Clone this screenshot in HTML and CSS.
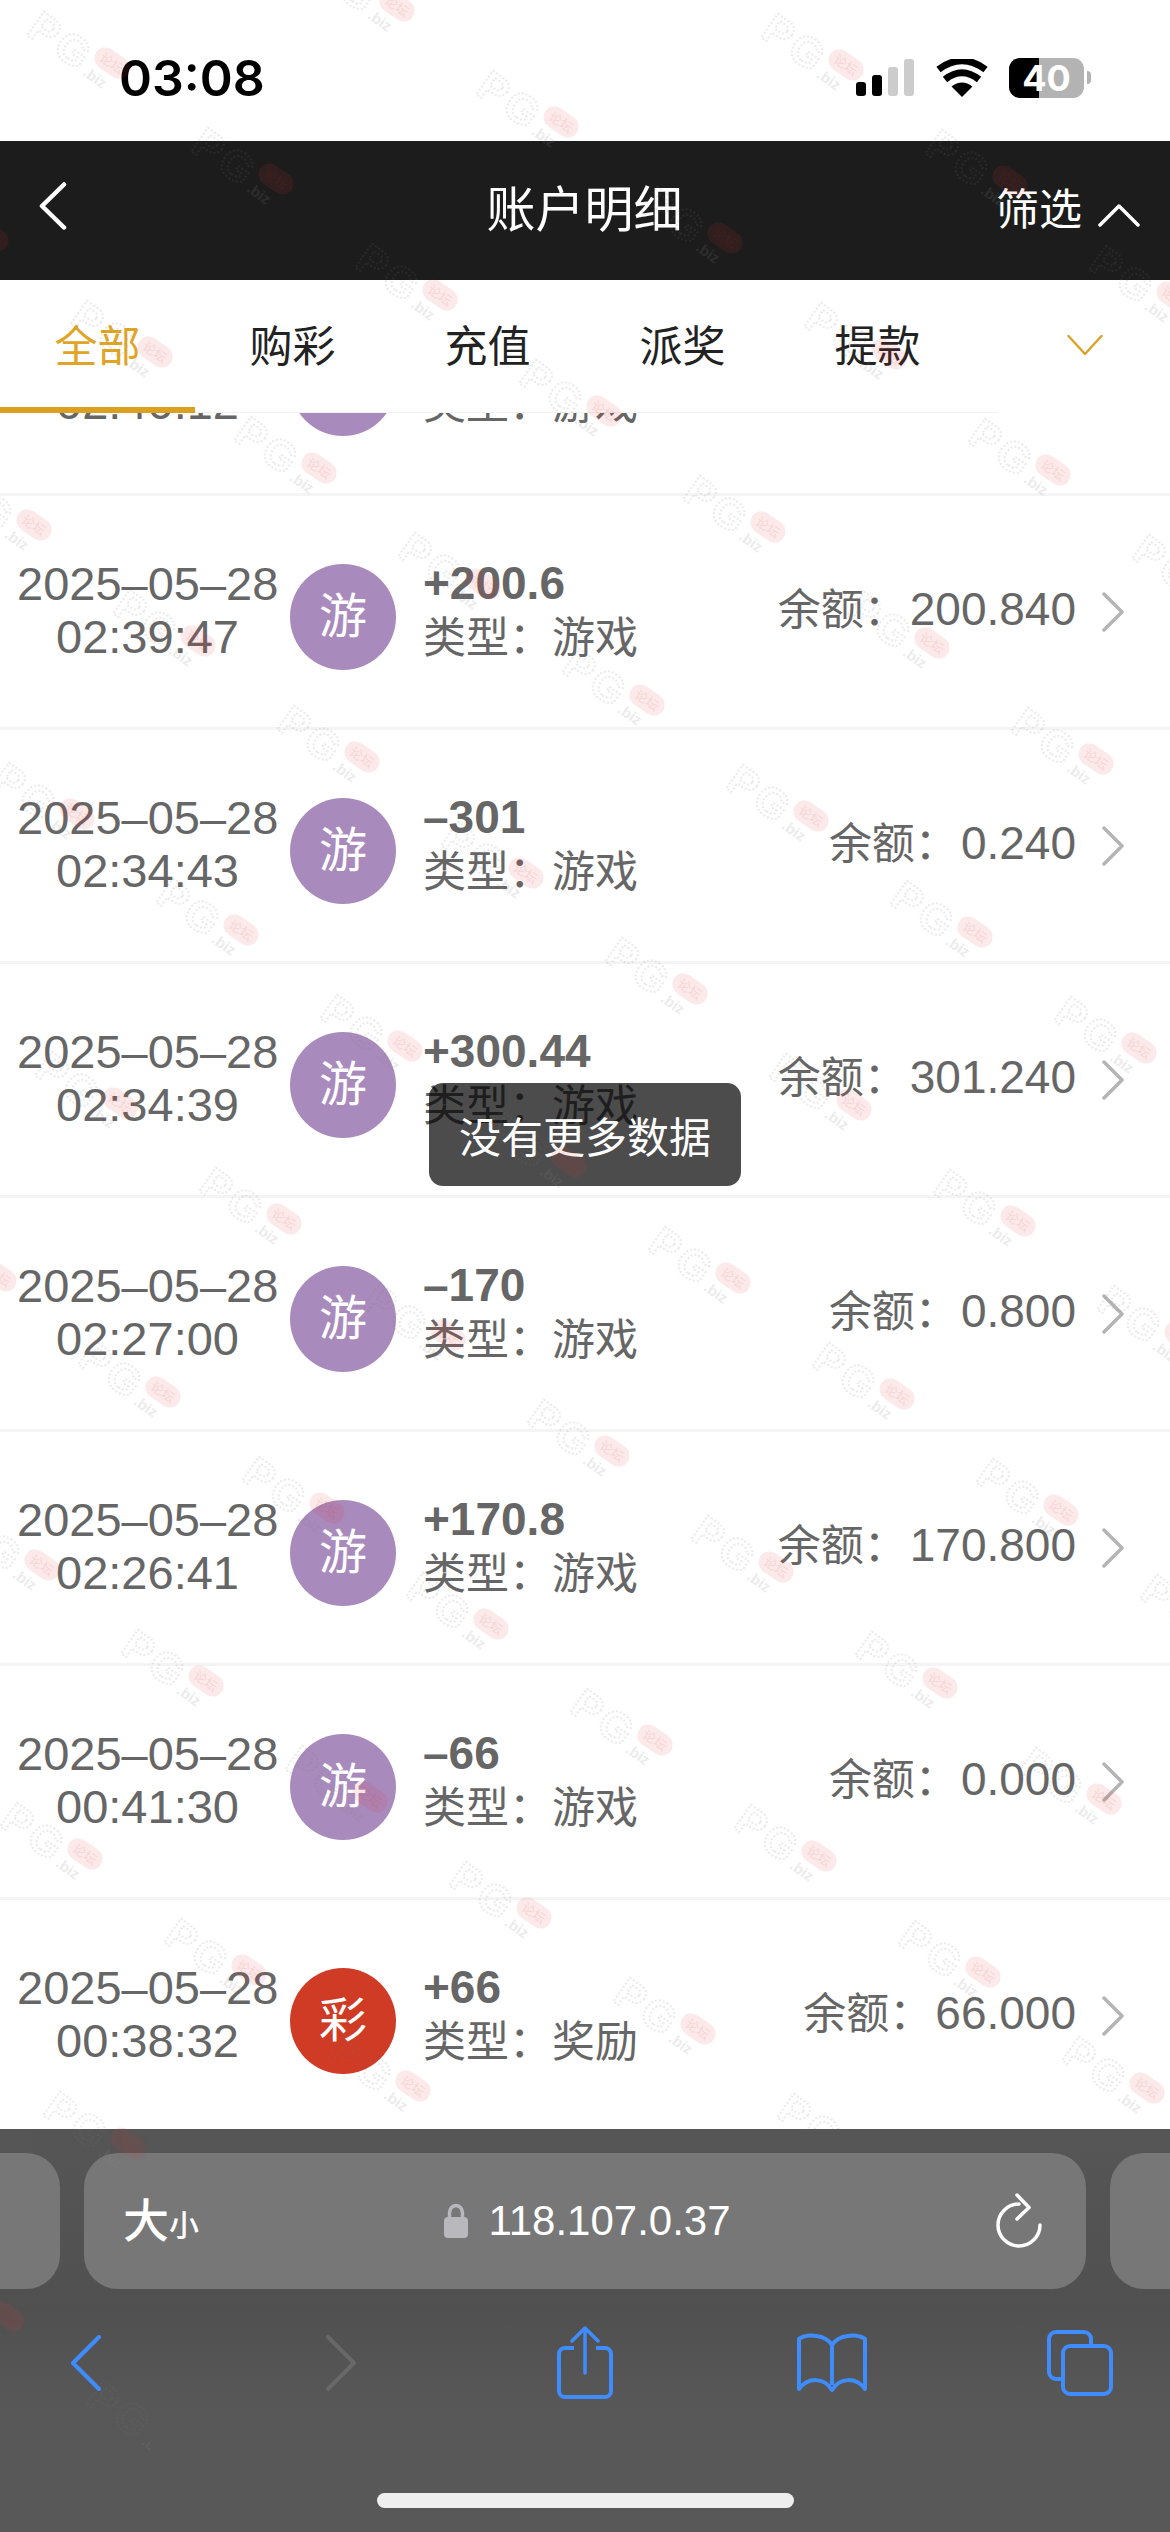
FILE: index.html
```html
<!DOCTYPE html>
<html lang="zh-CN">
<head>
<meta charset="utf-8">
<title>账户明细</title>
<link rel="stylesheet" href="styles.css">
</head>
<body>
<div class="app">
  <div class="status">
    <span class="time">03:08</span>
    <div class="status-icons">
      <div class="signal"><i class="b1"></i><i class="b2"></i><i class="b3"></i><i class="b4"></i></div>
      <svg class="wifi" width="52" height="38" viewBox="0 0 52 38"><path d="M26 38 L15.500 27.500 Q26 19.500 36.500 27.500Z" fill="#000"/><path d="M9 20.500 Q26 7 43 20.500" fill="none" stroke="#000" stroke-width="7"/><path d="M2.500 10.500 Q26 -7 49.500 10.500" fill="none" stroke="#000" stroke-width="7"/></svg>
      <div class="battery"><span>40</span></div>
      <div class="battery-tip"></div>
    </div>
  </div>
  <header class="nav">
    <svg class="nav-back" width="30" height="48" viewBox="0 0 30 48"><path d="M26 2.500 L4 24 L26 45.500" fill="none" stroke="#fff" stroke-width="4.500" stroke-linecap="round" stroke-linejoin="round"/></svg>
    <h1 class="title">账户明细</h1>
    <div class="filter"><span>筛选</span><svg width="42" height="24" viewBox="0 0 42 24"><path d="M2 22 L21 3 L40 22" fill="none" stroke="#fff" stroke-width="3.500" stroke-linecap="round" stroke-linejoin="round"/></svg></div>
  </header>
  <nav class="tabs">
    <div class="tab-track">
      <span class="tab active">全部</span><span class="tab">购彩</span><span class="tab">充值</span><span class="tab">派奖</span><span class="tab">提款</span>
    </div>
    <div class="tab-more"><svg width="36" height="22" viewBox="0 0 36 22"><path d="M1.500 2 L18 20 L34.500 2" fill="none" stroke="#dca32b" stroke-width="2.500" stroke-linecap="round" stroke-linejoin="round"/></svg></div>
  </nav>
  <main class="list-view">
    <div class="list">
      <div class="row">
        <div class="date">2025–05–28<br>02:40:12</div><div class="badge game">游</div>
        <div class="info"><div class="amount">&nbsp;</div><div class="type">类型：游戏</div></div>
      </div>
      <div class="row">
        <div class="date">2025–05–28<br>02:39:47</div><div class="badge game">游</div>
        <div class="info"><div class="amount">+200.6</div><div class="type">类型：游戏</div></div>
        <div class="balance">余额：<span class="num">200.840</span></div>
        <svg class="chev" width="24" height="40" viewBox="0 0 24 40"><path d="M3 2 L21 20 L3 38" fill="none" stroke="#b4b4b4" stroke-width="3.500" stroke-linecap="round" stroke-linejoin="round"/></svg>
      </div>
      <div class="row">
        <div class="date">2025–05–28<br>02:34:43</div><div class="badge game">游</div>
        <div class="info"><div class="amount">–301</div><div class="type">类型：游戏</div></div>
        <div class="balance">余额：<span class="num">0.240</span></div>
        <svg class="chev" width="24" height="40" viewBox="0 0 24 40"><path d="M3 2 L21 20 L3 38" fill="none" stroke="#b4b4b4" stroke-width="3.500" stroke-linecap="round" stroke-linejoin="round"/></svg>
      </div>
      <div class="row">
        <div class="date">2025–05–28<br>02:34:39</div><div class="badge game">游</div>
        <div class="info"><div class="amount">+300.44</div><div class="type">类型：游戏</div></div>
        <div class="balance">余额：<span class="num">301.240</span></div>
        <svg class="chev" width="24" height="40" viewBox="0 0 24 40"><path d="M3 2 L21 20 L3 38" fill="none" stroke="#b4b4b4" stroke-width="3.500" stroke-linecap="round" stroke-linejoin="round"/></svg>
      </div>
      <div class="row">
        <div class="date">2025–05–28<br>02:27:00</div><div class="badge game">游</div>
        <div class="info"><div class="amount">–170</div><div class="type">类型：游戏</div></div>
        <div class="balance">余额：<span class="num">0.800</span></div>
        <svg class="chev" width="24" height="40" viewBox="0 0 24 40"><path d="M3 2 L21 20 L3 38" fill="none" stroke="#b4b4b4" stroke-width="3.500" stroke-linecap="round" stroke-linejoin="round"/></svg>
      </div>
      <div class="row">
        <div class="date">2025–05–28<br>02:26:41</div><div class="badge game">游</div>
        <div class="info"><div class="amount">+170.8</div><div class="type">类型：游戏</div></div>
        <div class="balance">余额：<span class="num">170.800</span></div>
        <svg class="chev" width="24" height="40" viewBox="0 0 24 40"><path d="M3 2 L21 20 L3 38" fill="none" stroke="#b4b4b4" stroke-width="3.500" stroke-linecap="round" stroke-linejoin="round"/></svg>
      </div>
      <div class="row">
        <div class="date">2025–05–28<br>00:41:30</div><div class="badge game">游</div>
        <div class="info"><div class="amount">–66</div><div class="type">类型：游戏</div></div>
        <div class="balance">余额：<span class="num">0.000</span></div>
        <svg class="chev" width="24" height="40" viewBox="0 0 24 40"><path d="M3 2 L21 20 L3 38" fill="none" stroke="#b4b4b4" stroke-width="3.500" stroke-linecap="round" stroke-linejoin="round"/></svg>
      </div>
      <div class="row">
        <div class="date">2025–05–28<br>00:38:32</div><div class="badge lottery">彩</div>
        <div class="info"><div class="amount">+66</div><div class="type">类型：奖励</div></div>
        <div class="balance">余额：<span class="num">66.000</span></div>
        <svg class="chev" width="24" height="40" viewBox="0 0 24 40"><path d="M3 2 L21 20 L3 38" fill="none" stroke="#b4b4b4" stroke-width="3.500" stroke-linecap="round" stroke-linejoin="round"/></svg>
      </div>
    </div>
  </main>
  <footer class="browser">
    <div class="url-row">
      <div class="url-side"></div>
      <div class="url">
        <div class="aa"><span class="aa-big">大</span><span class="aa-small">小</span></div>
        <div class="address">
          <svg width="24" height="36" viewBox="0 0 24 36"><path d="M5.500 17 V10 a6.500 7.500 0 0 1 13 0 V17" fill="none" stroke="#b9b9bd" stroke-width="3.500"/><rect x="0" y="14" width="24" height="21" rx="4" fill="#b9b9bd"/></svg>
          <span>118.107.0.37</span>
        </div>
        <svg class="reload" width="46" height="56" viewBox="0 0 46 56"><path d="M23 11 A21 21 0 1 0 44 32" fill="none" stroke="#fff" stroke-width="3.500" stroke-linecap="round"/><path d="M21 2 L33 14.500 L21 26" fill="none" stroke="#fff" stroke-width="3.500" stroke-linecap="round" stroke-linejoin="round"/></svg>
      </div>
      <div class="url-side"></div>
    </div>
    <div class="tools">
      <svg width="32" height="56" viewBox="0 0 32 56"><path d="M29 2 L3 28 L29 54" fill="none" stroke="#3f8cff" stroke-width="4" stroke-linecap="round" stroke-linejoin="round"/></svg>
      <svg width="32" height="56" viewBox="0 0 32 56"><path d="M3 2 L29 28 L3 54" fill="none" stroke="#686868" stroke-width="4" stroke-linecap="round" stroke-linejoin="round"/></svg>
      <svg width="58" height="74" viewBox="0 0 58 74"><path d="M18 22 H9 a6 6 0 0 0 -6 6 V65 a6 6 0 0 0 6 6 H49 a6 6 0 0 0 6 -6 V28 a6 6 0 0 0 -6 -6 H40" fill="none" stroke="#3f8cff" stroke-width="4"/><path d="M29 3 V47" fill="none" stroke="#3f8cff" stroke-width="3.500" stroke-linecap="round"/><path d="M16 15 L29 2 L42 15" fill="none" stroke="#3f8cff" stroke-width="3.500" stroke-linecap="round" stroke-linejoin="round"/></svg>
      <svg width="72" height="60" viewBox="0 0 72 60"><path d="M36 12 C30 2 12 0 3 6 V56 C12 44 28 44 36 57 C44 44 60 44 69 56 V6 C60 0 42 2 36 12 Z M36 12 V52" fill="none" stroke="#3f8cff" stroke-width="4" stroke-linejoin="round"/></svg>
      <svg width="68" height="68" viewBox="0 0 68 68"><path d="M15 50 H10 a7 7 0 0 1 -7 -7 V10 a7 7 0 0 1 7 -7 H38 a7 7 0 0 1 7 7 V15" fill="none" stroke="#3f8cff" stroke-width="4"/><rect x="17" y="17" width="48" height="48" rx="7" fill="none" stroke="#3f8cff" stroke-width="4"/></svg>
    </div>
    <div class="home-bar"></div>
  </footer>
  <div class="toast">没有更多数据</div>
  <svg class="watermark" width="1170" height="2532" viewBox="0 0 1170 2532" aria-hidden="true">
    <defs>
      <clipPath id="wm-area"><rect x="0" y="0" width="1170" height="2129"/><rect x="0" y="2129" width="150" height="403"/></clipPath>
      <g id="mark" transform="rotate(35)">
        <text class="wm-pg" x="-88" y="26">PG</text>
        <rect class="wm-pill" x="-19" y="-11" width="38" height="22" rx="11"/>
        <text class="wm-forum" x="0" y="5">论坛</text>
        <text class="wm-biz" x="-18" y="27">.biz</text>
      </g>
      <g id="col">
        <use href="#mark" x="-86" y="-578"/><use href="#mark" x="-43" y="-289"/><use href="#mark" x="0" y="0"/>
        <use href="#mark" x="43" y="289"/><use href="#mark" x="86" y="578"/><use href="#mark" x="129" y="867"/>
        <use href="#mark" x="172" y="1156"/><use href="#mark" x="215" y="1445"/><use href="#mark" x="258" y="1734"/>
        <use href="#mark" x="301" y="2023"/><use href="#mark" x="344" y="2312"/><use href="#mark" x="387" y="2601"/>
      </g>
    </defs>
    <g clip-path="url(#wm-area)">
      <g transform="translate(112 63)">
        <use href="#col" x="-984" y="-696"/><use href="#col" x="-820" y="-580"/><use href="#col" x="-656" y="-464"/>
        <use href="#col" x="-492" y="-348"/><use href="#col" x="-328" y="-232"/><use href="#col" x="-164" y="-116"/>
        <use href="#col" x="0" y="0"/><use href="#col" x="164" y="116"/><use href="#col" x="328" y="232"/>
        <use href="#col" x="492" y="348"/><use href="#col" x="656" y="464"/><use href="#col" x="820" y="580"/>
        <use href="#col" x="984" y="696"/><use href="#col" x="1148" y="812"/>
      </g>
    </g>
  </svg>
</div>
</body>
</html>
```
FILE: styles.css
```css
* { box-sizing: border-box; }
html, body { margin: 0; padding: 0; background: #fff; }
body { font-family: "Liberation Sans", "Noto Sans CJK SC", sans-serif; overflow: hidden; }
.app { position: relative; width: 1170px; height: 2532px; display: flex; flex-direction: column; overflow: hidden; background: #fff; }

.status { height: 141px; flex: none; display: flex; align-items: center; justify-content: space-between; padding: 14px 79px 0 119px; background: #fff; }
.time { font-family: Inter, "Liberation Sans", sans-serif; font-size: 50px; font-weight: 600; color: #000; line-height: 1; }
.status-icons { display: flex; align-items: center; }
.signal { display: flex; align-items: flex-end; gap: 6px; height: 37px; margin-right: 22px; }
.signal i { display: block; width: 10px; border-radius: 3px; background: #000; }
.signal .b1 { height: 14px; }
.signal .b2 { height: 21px; }
.signal .b3 { height: 29px; background: #ccc; }
.signal .b4 { height: 37px; background: #ccc; }
.wifi { margin-right: 21px; }
.battery { width: 75px; height: 40px; border-radius: 11px; background: linear-gradient(90deg, #000 40%, #b3b3b3 40%); display: flex; align-items: center; justify-content: center; }
.battery span { font-family: Inter, "Liberation Sans", sans-serif; font-size: 36px; font-weight: 700; color: #fff; line-height: 1; }
.battery-tip { width: 4px; height: 13px; margin-left: 3px; border-radius: 0 4px 4px 0; background: #b3b3b3; }

.nav { height: 139px; flex: none; background: #1c1c1c; display: grid; grid-template-columns: 1fr auto 1fr; align-items: center; padding: 0 30px 0 38px; color: #fff; }
.nav-back { margin-top: -10px; }
.title { margin: 0 0 0 -9px; font-size: 49px; font-weight: 400; line-height: 1; }
.filter { justify-self: end; display: flex; align-items: center; gap: 16px; font-size: 43px; line-height: 1; }
.filter svg { margin-top: 8px; }

.tabs { height: 133px; flex: none; display: flex; background: #fff; }
.tab-track { width: 998px; flex: none; display: flex; align-items: stretch; border-bottom: 1px solid #f1f1f1; }
.tab { width: 195px; padding-top: 44px; text-align: center; font-size: 43px; line-height: 46px; color: #222; }
.tab.active { color: #e0a526; border-bottom: 6px solid #dca020; height: 133px; }
.tab-more { flex: 1; display: flex; justify-content: center; padding: 54px 0 0 1px; }

.list-view { flex: 1; min-height: 0; overflow: hidden; }
.list { margin-top: -151px; }
.row { height: 234px; display: flex; align-items: center; padding: 0 45px 0 17px; border-bottom: 3px solid #f4f4f4; color: #666; }
.date { width: 261px; flex: none; padding-bottom: 3px; text-align: center; font-size: 47px; line-height: 53px; white-space: nowrap; }
.badge { width: 106px; height: 106px; flex: none; margin: 10px 27px 0 12px; border-radius: 50%; display: flex; align-items: center; justify-content: center; color: #fff; font-size: 48px; line-height: 1; }
.badge.game { background: #a98abc; }
.badge.lottery { background: #d03b26; }
.info { flex: 1; min-width: 0; padding-bottom: 1px; }
.amount { font-size: 46px; font-weight: 700; line-height: 53px; }
.type { margin-top: 2px; font-size: 43px; line-height: 53px; }
.balance { font-size: 43px; line-height: 53px; margin-top: -4px; white-space: nowrap; }
.num { margin-left: 3px; font-size: 46px; }
.chev { flex: none; margin-left: 25px; }

.browser { height: 403px; flex: none; padding-top: 24px; background: linear-gradient(180deg, #565656 0, #505050 45%, #585858 70%, #585858 100%); }
.url-row { display: flex; justify-content: center; gap: 24px; height: 136px; }
.url-side { width: 200px; flex: none; border-radius: 34px; background: #777; }
.url { width: 1002px; flex: none; border-radius: 34px; background: #777; display: grid; grid-template-columns: 1fr auto 1fr; align-items: center; padding: 0 44px 0 39px; color: #fff; }
.aa { display: flex; align-items: flex-end; font-weight: 500; }
.aa-big { font-size: 46px; line-height: 1; }
.aa-small { font-size: 30px; line-height: 1; margin-bottom: 3px; }
.address { display: flex; align-items: center; gap: 20px; margin-left: 10px; font-size: 42px; line-height: 1; }
.reload { justify-self: end; }
.tools { display: grid; grid-template-columns: 172px 338px 150px 344px 152px; justify-items: center; align-items: center; height: 80px; margin-top: 34px; }
.home-bar { width: 417px; height: 15px; margin: 90px auto 0; border-radius: 8px; background: #eee; }

.toast { position: absolute; left: 429px; top: 1083px; width: 312px; height: 103px; border-radius: 14px; background: rgba(0, 0, 0, .7); color: #fff; font-size: 42px; display: flex; align-items: center; justify-content: center; }

.watermark { position: absolute; left: 0; top: 0; pointer-events: none; }
.wm-pg { font-family: "Liberation Sans", sans-serif; font-size: 42px; font-weight: 700; letter-spacing: 4px; fill: none; stroke: #777; stroke-width: 2; stroke-dasharray: 2 2; opacity: .14; }
.wm-pill { fill: #e53935; opacity: .11; }
.wm-forum { font-family: "Noto Sans CJK SC", sans-serif; font-size: 13px; text-anchor: middle; fill: #c62828; opacity: .1; }
.wm-biz { font-family: "Liberation Sans", sans-serif; font-size: 15px; font-weight: 700; fill: #888; opacity: .16; }
```
